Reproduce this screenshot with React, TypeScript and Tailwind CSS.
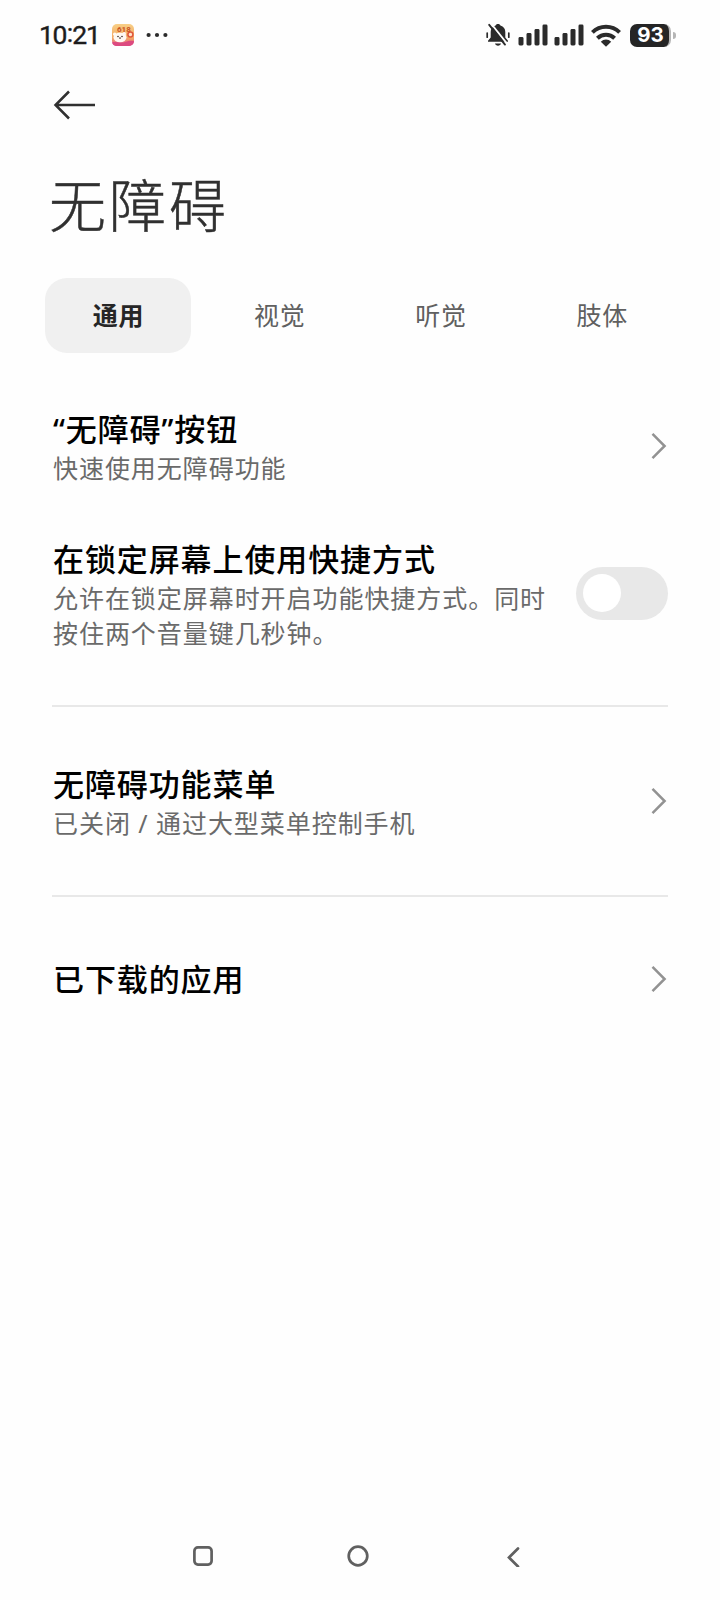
import { useState } from "react";

type Item = { title: string; desc?: string };

const TABS = ["通用", "视觉", "听觉", "肢体"];

function SignalBars() {
  return (
    <svg width="30" height="22" viewBox="0 0 30 22" fill="#2b2b2b">
      <rect x="0.5" y="13" width="5" height="8.5" rx="1.4" />
      <rect x="8.5" y="9" width="5" height="12.5" rx="1.4" />
      <rect x="16.5" y="5" width="5" height="16.5" rx="1.4" />
      <rect x="24.5" y="0.5" width="5" height="21" rx="1.4" />
    </svg>
  );
}

function StatusBar() {
  return (
    <div className="flex h-[70px] items-center justify-between pr-[44px] pl-[39px]">
      <div className="flex items-center">
        <span className="w-[60px] font-['Roboto'] text-[26.5px] leading-none tracking-[-1.3px] text-[#1c1c1c] [-webkit-text-stroke:0.4px_#1c1c1c]">
          10<span className="relative -top-[2px] mx-[0.5px]">:</span>21
        </span>
        <svg className="ml-[13px]" width="22" height="22" viewBox="0 0 22 22">
          <defs>
            <linearGradient id="app" x1="0" y1="0" x2="0" y2="1">
              <stop offset="0" stopColor="#f8cf86" />
              <stop offset="0.65" stopColor="#f2a763" />
              <stop offset="1" stopColor="#e0529a" />
            </linearGradient>
          </defs>
          <rect width="22" height="22" rx="5" fill="url(#app)" />
          <path d="M0 18.500c5-1.500 9 1 13-.5s6-1.500 9-1a5 5 0 0 1-5 5H5a5 5 0 0 1-5-3.500z" fill="#dc4a80" />
          <ellipse cx="8" cy="13.500" rx="6.500" ry="4.800" fill="#fff9f3" />
          <circle cx="2.800" cy="10.200" r="1.800" fill="#fff9f3" />
          <circle cx="12.200" cy="9.700" r="1.800" fill="#fff9f3" />
          <circle cx="6" cy="12.500" r="0.800" fill="#3b2a26" />
          <circle cx="10" cy="12.500" r="0.800" fill="#3b2a26" />
          <circle cx="8" cy="14.100" r="0.800" fill="#3b2a26" />
          <circle cx="18.400" cy="10.500" r="2.500" fill="#ffe3c8" stroke="#e0573c" strokeWidth="1.500" />
          <text x="5" y="7.500" fontSize="8" fontWeight="700" fontFamily="Roboto" fill="#c9541f">618</text>
        </svg>
        <svg className="ml-[12px]" width="22" height="6" viewBox="0 0 22 6" fill="#2b2b2b">
          <circle cx="2.600" cy="3" r="2.100" />
          <circle cx="11" cy="3" r="2.100" />
          <circle cx="19.400" cy="3" r="2.100" />
        </svg>
      </div>

      <div className="flex items-center">
        <svg width="24" height="24" viewBox="0 0 24 24" fill="#2b2b2b">
          <path d="M12 1c1.400 0 2.100.6 2.400 1.600 3.300 1 4.900 3.300 4.900 6.400v5.400l2.700 3.300v1.100H2v-1.100l2.700-3.300V9c0-3.100 1.600-5.400 4.900-6.400C9.900 1.600 10.600 1 12 1z" />
          <path d="M9 20.600h6c-.4 1.400-1.500 2.100-3 2.100s-2.600-.7-3-2.100z" />
          <path d="M1.200 10v4.200M22.800 10v4.200" stroke="#2b2b2b" strokeWidth="1.700" strokeLinecap="round" />
          <path d="M4.600 0 21.600 21.400" stroke="#fefefe" strokeWidth="1.800" />
          <path d="M3.200 1.800 19 21.600" stroke="#2b2b2b" strokeWidth="1.900" strokeLinecap="round" />
        </svg>
        <div className="ml-[8px] flex gap-[6px]">
          <SignalBars />
          <SignalBars />
        </div>
        <svg className="ml-[7px]" width="30" height="23" viewBox="0 0 30 23">
          <g fill="none" stroke="#2b2b2b" strokeWidth="4">
            <path d="M1.400 8.400a19.500 19.500 0 0 1 27.200 0" />
            <path d="M6.400 14.200a12.400 12.400 0 0 1 17.200 0" />
          </g>
          <path d="M15 22.700 9.800 17.800a7.300 7.300 0 0 1 10.400 0z" fill="#2b2b2b" />
        </svg>
        <div className="ml-[9px] flex items-center gap-[2px]">
          <div className="flex h-[23px] w-[41px] items-center justify-center rounded-[7px] border-r-2 border-[#b5b5b5] bg-[#252525] pl-[2px] font-['Inter'] text-[20.5px] leading-none font-bold text-white">
            93
          </div>
          <div className="h-[7px] w-[3px] rounded-r-full bg-[#b5b5b5]" />
        </div>
      </div>
    </div>
  );
}

function Chevron() {
  return (
    <svg className="mr-px shrink-0" width="16" height="28" viewBox="0 0 16 28" fill="none">
      <path d="M1.500 1.800 13.600 14 1.500 26.200" stroke="#929292" strokeWidth="2.500" />
    </svg>
  );
}

function ItemText({ title, desc }: Item) {
  return (
    <div className="pt-px pl-px">
      <div className="text-[31px] leading-[44px] font-medium tracking-[0.9px] text-black">{title}</div>
      {desc && (
        <div className="-mt-[0.5px] text-[25px] leading-[35px] tracking-[0.95px] text-[#6a6a6a]">{desc}</div>
      )}
    </div>
  );
}

function LinkRow({ title, desc }: Item) {
  return (
    <div className="flex items-center justify-between">
      <ItemText title={title} desc={desc} />
      <Chevron />
    </div>
  );
}

export default function App() {
  const [tab, setTab] = useState(0);
  const [shortcut, setShortcut] = useState(false);

  return (
    <div
      lang="zh-CN"
      className="flex h-[1600px] w-[720px] flex-col bg-[#fefefe] font-['Noto_Sans','Noto_Sans_CJK_SC',sans-serif]"
    >
      <StatusBar />

      <div className="px-[53px] pt-[20px]">
        <svg width="42" height="30" viewBox="0 0 42 30" fill="none" stroke="#303030" strokeWidth="2.500">
          <path d="M16 1.500 2.500 15 16 28.500M2.500 15H42" />
        </svg>
      </div>

      <h1 className="mt-[45px] pl-[49px] text-[57px] leading-[80px] font-light tracking-[3px] text-[#303030] [-webkit-text-stroke:0.5px_#303030]">
        无障碍
      </h1>

      <div className="mx-[45px] mt-[33px] grid grid-cols-4 gap-[15px]">
        {TABS.map((label, i) => (
          <button
            key={label}
            onClick={() => setTab(i)}
            className={
              i === tab
                ? "h-[75px] rounded-[22px] bg-[#f0f0f0] pt-px pl-px text-[25px] font-bold tracking-[0.8px] text-[#262626]"
                : "h-[75px] rounded-[22px] pt-px pl-px text-[25px] tracking-[0.8px] text-[#606060]"
            }
          >
            {label}
          </button>
        ))}
      </div>

      <div className="mt-[53px] flex flex-col px-[52px]">
        <LinkRow title="“无障碍”按钮" desc="快速使用无障碍功能" />

        <div className="mt-[50.5px] flex items-center justify-between">
          <div className="w-[505px]">
            <ItemText title="在锁定屏幕上使用快捷方式" desc="允许在锁定屏幕时开启功能快捷方式。同时按住两个音量键几秒钟。" />
          </div>
          <button
            onClick={() => setShortcut(!shortcut)}
            className={
              shortcut
                ? "flex h-[53px] w-[92px] items-center justify-end rounded-full bg-[#3482ff] px-[7px]"
                : "flex h-[53px] w-[92px] items-center rounded-full bg-[#e8e8e8] px-[7px]"
            }
          >
            <span className="size-[38px] rounded-full bg-white" />
          </button>
        </div>

        <div className="mt-[54.5px] mb-[54px] h-[2px] bg-[#e8e8e8]" />
        <LinkRow title="无障碍功能菜单" desc="已关闭 / 通过大型菜单控制手机" />
        <div className="mt-[54.5px] mb-[59px] h-[2px] bg-[#e8e8e8]" />
        <LinkRow title="已下载的应用" />
      </div>

      <div className="mt-auto flex h-[88px] items-center justify-center gap-[133.5px] pr-[4px]">
        <svg width="22" height="22" viewBox="0 0 22 22" fill="none" stroke="#606060" strokeWidth="2.700">
          <rect x="2.400" y="2.400" width="17.200" height="17.200" rx="3.500" />
        </svg>
        <svg width="22" height="22" viewBox="0 0 22 22" fill="none" stroke="#606060" strokeWidth="2.700">
          <circle cx="11" cy="11" r="9.300" />
        </svg>
        <svg width="22" height="22" viewBox="0 0 22 22" fill="none" stroke="#606060" strokeWidth="2.700" strokeLinecap="round">
          <path d="M15 3.500 6 12.500l9 9" />
        </svg>
      </div>
    </div>
  );
}
